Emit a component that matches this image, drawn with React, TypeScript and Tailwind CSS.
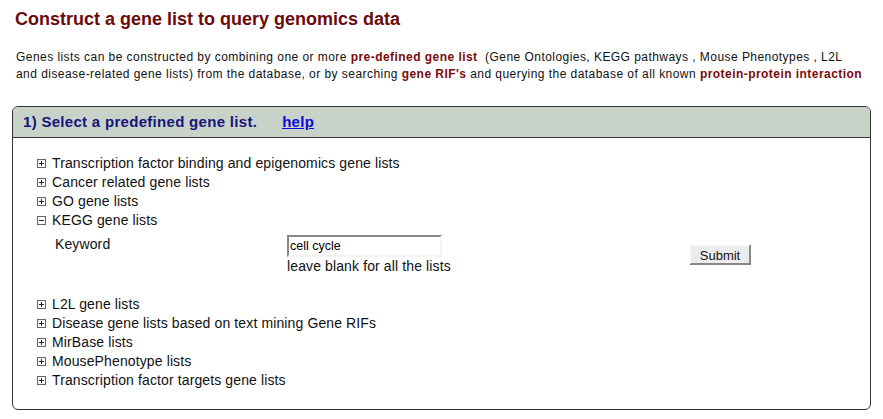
import React from "react";

const TOP_LISTS = [
  "Transcription factor binding and epigenomics gene lists",
  "Cancer related gene lists",
  "GO gene lists",
];

const BOTTOM_LISTS = [
  "L2L gene lists",
  "Disease gene lists based on text mining Gene RIFs",
  "MirBase lists",
  "MousePhenotype lists",
  "Transcription factor targets gene lists",
];

function ToggleIcon({ open }: { open?: boolean }) {
  return (
    <svg width="9" height="9" viewBox="0 0 9 9" className="mr-[6px] shrink-0">
      <rect x="0.5" y="0.5" width="8" height="8" fill="white" stroke="#666" />
      <line x1="2" y1="4.5" x2="7" y2="4.5" stroke="#222" />
      {!open && <line x1="4.5" y1="2" x2="4.5" y2="7" stroke="#222" />}
    </svg>
  );
}

function ListRow({ label, open }: { label: string; open?: boolean }) {
  return (
    <div className="flex h-[19px] items-center">
      <ToggleIcon open={open} />
      <span>{label}</span>
    </div>
  );
}

export default function App() {
  return (
    <div className="h-[419px] w-[883px] overflow-hidden bg-white font-['Liberation_Sans',Arial,sans-serif] text-black">
      <h1 className="ml-[15px] pt-[9px] text-[18px] font-bold leading-[21px] text-[#6b0a0a]">
        Construct a gene list to query genomics data
      </h1>

      <p className="ml-[16px] mt-[19px] text-[12px] leading-[17px] tracking-[0.45px] text-[#111]">
        Genes lists can be constructed by combining one or more{" "}
        <b className="text-[#7a0a0a]">pre-defined gene list</b>&nbsp; (Gene Ontologies, KEGG pathways , Mouse
        Phenotypes , L2L
        <br />
        and disease-related gene lists) from the database, or by searching{" "}
        <b className="text-[#7a0a0a]">gene RIF's</b> and querying the database of all known{" "}
        <b className="text-[#7a0a0a]">protein-protein interaction</b>
      </p>

      <div className="ml-[12px] mt-[23px] w-[859px] rounded-[6px] border border-[#333]">
        <div className="flex h-[31px] items-center rounded-t-[5px] border-b border-[#333] bg-[#c9d2c9] pl-[10px] text-[15px] font-bold tracking-[0.3px] text-[#15157a]">
          <span>1) Select a predefined gene list.</span>
          <a href="#" className="ml-[25px] text-[#0b0bd6] underline">
            help
          </a>
        </div>

        <div className="pb-[19px] pl-[24px] pt-[16px] text-[14px] tracking-[0.12px] text-[#111]">
          {TOP_LISTS.map((l) => (
            <ListRow key={l} label={l} />
          ))}
          <ListRow label="KEGG gene lists" open />

          <div className="mt-[5px] grid grid-cols-[232px_402px_auto] pl-[18px]">
            <div className="pt-[1px] leading-[17px]">Keyword</div>
            <div>
              <input
                defaultValue="cell cycle"
                className="h-[22px] w-[155px] border-2 border-b-[#f4f4f4] border-l-[#888] border-r-[#f4f4f4] border-t-[#888] bg-white px-[1px] text-[12.5px] tracking-normal text-black outline-none"
              />
              <div className="leading-[19px]">leave blank for all the lists</div>
            </div>
            <div className="pt-[9px]">
              <button
                type="button"
                className="h-[21px] w-[62px] border-2 border-b-[#888] border-l-[#fafafa] border-r-[#888] border-t-[#fafafa] bg-[#ececec] text-[13px] tracking-normal text-[#111]"
              >
                Submit
              </button>
            </div>
          </div>

          <div className="mt-[19px]">
            {BOTTOM_LISTS.map((l) => (
              <ListRow key={l} label={l} />
            ))}
          </div>
        </div>
      </div>
    </div>
  );
}
